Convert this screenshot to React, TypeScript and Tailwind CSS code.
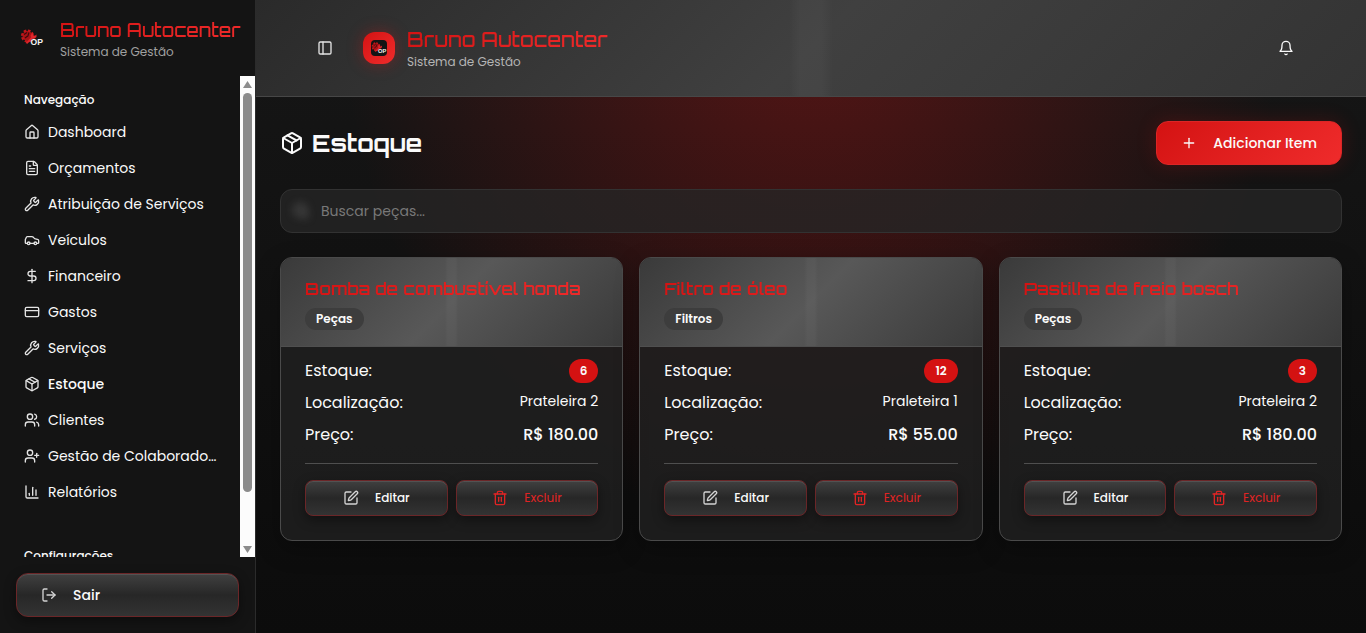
import React from "react";
import {
  House, FileText, Wrench, Car, DollarSign, CreditCard, Package, Users, UserPlus,
  ChartColumn, LogOut, PanelLeft, Plus, Search, SquarePen, Trash2, type LucideIcon,
} from "lucide-react";

const display = "font-['Orbitron','DejaVu_Sans',sans-serif]";

const nav: { label: string; icon: LucideIcon; active?: boolean }[] = [
  { label: "Dashboard", icon: House },
  { label: "Orçamentos", icon: FileText },
  { label: "Atribuição de Serviços", icon: Wrench },
  { label: "Veículos", icon: Car },
  { label: "Financeiro", icon: DollarSign },
  { label: "Gastos", icon: CreditCard },
  { label: "Serviços", icon: Wrench },
  { label: "Estoque", icon: Package, active: true },
  { label: "Clientes", icon: Users },
  { label: "Gestão de Colaboradores", icon: UserPlus },
  { label: "Relatórios", icon: ChartColumn },
];

const items = [
  { name: "Bomba de combustível honda", category: "Peças", stock: 6, place: "Prateleira 2", price: "R$ 180.00" },
  { name: "Filtro de óleo", category: "Filtros", stock: 12, place: "Praleteira 1", price: "R$ 55.00" },
  { name: "Pastilha de freio bosch", category: "Peças", stock: 3, place: "Prateleira 2", price: "R$ 180.00" },
];

const metal =
  "border border-[#6b2628] bg-[linear-gradient(180deg,#404040_0%,#272727_50%,#333333_100%)] shadow-[0_4px_12px_rgba(0,0,0,0.4),inset_0_1px_0_rgba(255,255,255,0.1)]";

function Logo({ className }: { className: string }) {
  return (
    <svg viewBox="4 4 24 24" className={className} role="img" aria-label="OP">
      <circle cx="11.5" cy="14" r="5" fill="#a81216" />
      <circle cx="11.5" cy="14" r="5.4" fill="none" stroke="#c4161a" strokeWidth="2.4" strokeDasharray="2.6 1.6" />
      <path d="M8 12.5l3-2M9 16l3.5-2.5M13 10.5l-1 3" stroke="#3a0a0c" strokeWidth="1.1" />
      <path d="M9.5 21l5.5-5.5-.4-2.6 2.2-1.9.4 2.2 1.8.6 1.4-1.4.1 2.6-2.2 1.8-1.9-.1-5 5z" fill="#e0262a" />
      <text x="14.6" y="23.4" fontSize="8.6" fontWeight="700" fontFamily="'Liberation Sans', sans-serif" fill="#f5f5f5">OP</text>
    </svg>
  );
}

function BellIcon() {
  return (
    <svg viewBox="0 0 24 24" className="size-4" fill="none" stroke="currentColor" strokeWidth="2" strokeLinecap="round" strokeLinejoin="round" aria-hidden="true">
      <path d="M6 8a6 6 0 0 1 12 0c0 7 3 9 3 9H3s3-2 3-9" />
      <path d="M10.3 21a1.94 1.94 0 0 0 3.4 0" />
    </svg>
  );
}

function Sidebar() {
  return (
    <aside className="flex w-64 shrink-0 flex-col border-r border-[#2b2b2b] bg-[#141414]">
      <div className="flex h-19 shrink-0 items-center gap-4 px-5">
        <Logo className="size-6 shrink-0" />
        <div className="whitespace-nowrap">
          <p className={`${display} text-lg leading-7 font-medium`}>
            <span className="bg-linear-135 from-[#d41212] to-[#ef2b2b] bg-clip-text text-transparent">Bruno Autocenter</span>
          </p>
          <p className="text-xs leading-4 text-[#a0a0a0]">Sistema de Gestão</p>
        </div>
      </div>

      <div className="flex min-h-0 flex-1">
        <nav className="min-w-0 flex-1 overflow-y-auto px-2 [scrollbar-width:none]">
          <section className="p-2">
            <h2 className="flex h-8 items-center px-2 text-xs font-medium">Navegação</h2>
            <ul className="flex flex-col gap-1">
              {nav.map(({ label, icon: Icon, active }) => (
                <li key={label}>
                  <a href="#" className={`flex h-8 items-center gap-2 pr-1 pl-2 text-sm ${active ? "font-medium" : ""}`}>
                    <Icon className="size-4 shrink-0 text-[#e4e4e4]" />
                    <span className="truncate">{label}</span>
                  </a>
                </li>
              ))}
            </ul>
          </section>
          <section className="mt-4 p-2">
            <h2 className="flex h-8 items-center px-2 text-xs font-medium">Configurações</h2>
          </section>
        </nav>
        <div aria-hidden="true" className="flex w-[15px] shrink-0 flex-col items-center bg-[#fcfcfc]">
          <svg viewBox="0 0 15 17" className="h-[17px] w-[15px]"><path d="M7.5 5L12 12H3z" fill="#8b8b8b" /></svg>
          <div className="w-[9px] flex-[399] rounded-full bg-[#8b8b8b]" />
          <div className="flex-[48]" />
          <svg viewBox="0 0 15 17" className="h-[17px] w-[15px]"><path d="M7.5 13L3 6h9z" fill="#8b8b8b" /></svg>
        </div>
      </div>

      <div className="shrink-0 p-4">
        <button type="button" className={`flex h-11 w-full items-center gap-4 rounded-xl px-6 text-sm font-medium ${metal}`}>
          <LogOut className="size-4 text-[#d4d4d4]" />
          Sair
        </button>
      </div>
    </aside>
  );
}

function TopBar() {
  return (
    <header className="flex h-[97px] shrink-0 items-center border-b border-[#474747] bg-[linear-gradient(90deg,transparent_48%,rgba(255,255,255,0.03)_49%,rgba(255,255,255,0.03)_51%,transparent_52%),linear-gradient(135deg,#2a2a2a_0%,#404040_50%,#333333_100%)] pr-14 pl-[55px]">
      <button type="button" aria-label="Alternar menu" className="mr-6 flex size-7 items-center justify-center text-[#e4e4e4]">
        <PanelLeft className="size-4" />
      </button>
      <div className="mr-3 flex size-8 items-center justify-center rounded-xl bg-linear-135 from-[#d41212] to-[#ef2b2b] shadow-[0_0_16px_rgba(220,20,20,0.35)]">
        <Logo className="size-4 rounded-sm bg-[#141414]" />
      </div>
      <div className="whitespace-nowrap">
        <p className={`${display} text-xl leading-7 font-medium`}>
          <span className="bg-linear-135 from-[#d41212] to-[#ef2b2b] bg-clip-text text-transparent">Bruno Autocenter</span>
        </p>
        <p className="text-xs leading-4 text-[#b4b4b4]">Sistema de Gestão</p>
      </div>
      <button type="button" aria-label="Notificações" className="ml-auto flex size-12 items-center justify-center">
        <BellIcon />
      </button>
    </header>
  );
}

function ItemCard({ item }: { item: (typeof items)[number] }) {
  return (
    <article className="overflow-hidden rounded-xl border border-[#4a4a4a] bg-[#212121]/80 shadow-[0_8px_24px_rgba(0,0,0,0.3)]">
      <div className="border-b border-[#4f4f4f] bg-[linear-gradient(90deg,transparent_48%,rgba(255,255,255,0.03)_49%,rgba(255,255,255,0.03)_51%,transparent_52%),linear-gradient(135deg,#3a3a3a_0%,#585858_50%,#3a3a3a_100%)] px-6 pt-5 pb-4">
        <h3 className={`${display} truncate bg-linear-135 from-[#d41212] to-[#ef2b2b] bg-clip-text text-[17px] leading-[22px] font-semibold text-transparent`}>
          {item.name}
        </h3>
        <span className="mt-2 inline-flex h-[22px] items-center rounded-full bg-[#3d3d3d] px-[11px] align-top text-xs font-semibold">
          {item.category}
        </span>
      </div>
      <div className="px-6 pt-3 pb-6">
        <dl className="flex flex-col gap-2">
          <div className="flex h-6 justify-between">
            <dt>Estoque:</dt>
            <dd className="flex h-6 items-center rounded-full bg-[#d41212] px-[11px] text-xs font-semibold">{item.stock}</dd>
          </div>
          <div className="flex h-6 justify-between">
            <dt>Localização:</dt>
            <dd className="text-sm">{item.place}</dd>
          </div>
          <div className="flex h-6 justify-between">
            <dt>Preço:</dt>
            <dd className="font-medium">{item.price}</dd>
          </div>
        </dl>
        <div className="mt-4 grid grid-cols-2 gap-2 border-t border-[#4f4f4f] pt-4">
          <button type="button" className={`flex h-9 items-center justify-center gap-4 rounded-lg text-xs font-medium ${metal}`}>
            <SquarePen className="size-4 text-[#d4d4d4]" />
            Editar
          </button>
          <button type="button" className={`flex h-9 items-center justify-center gap-4 rounded-lg text-xs text-[#e02424] ${metal}`}>
            <Trash2 className="size-4" />
            Excluir
          </button>
        </div>
      </div>
    </article>
  );
}

export default function App() {
  return (
    <div className="flex h-screen bg-[#0d0d0d] font-['Poppins','Inter',sans-serif] text-[#fafafa]">
      <Sidebar />
      <div className="flex min-w-0 flex-1 flex-col bg-[radial-gradient(ellipse_at_top,rgba(220,20,20,0.33)_0%,transparent_60%),linear-gradient(180deg,#161616_0%,#0c0c0c_100%)]">
        <TopBar />
        <main className="min-h-0 flex-1 overflow-y-auto p-6 [scrollbar-width:none]">
          <div className="flex items-center justify-between">
            <h1 className={`flex items-center gap-2 text-2xl font-bold ${display}`}>
              <Package className="size-6" />
              Estoque
            </h1>
            <button type="button" className="flex h-11 items-center gap-4 rounded-xl border border-[#dc2626] bg-linear-135 from-[#d41212] to-[#ef2b2b] px-6 text-sm font-medium shadow-[0_0_20px_rgba(220,20,20,0.2)]">
              <Plus className="size-4" />
              Adicionar Item
            </button>
          </div>

          <label className="mt-6 flex h-11 items-center gap-3 rounded-xl border border-[#323232] bg-[#262626]/80 px-3">
            <Search className="size-4 text-[#8a8a8a] blur-xs" />
            <input
              type="text"
              aria-label="Buscar peças"
              placeholder="Buscar peças..."
              className="min-w-0 flex-1 bg-transparent text-sm outline-none placeholder:text-[#787878]"
            />
          </label>

          <div className="mt-6 grid grid-cols-3 gap-4">
            {items.map((item) => (
              <ItemCard key={item.name} item={item} />
            ))}
          </div>
        </main>
      </div>
    </div>
  );
}
